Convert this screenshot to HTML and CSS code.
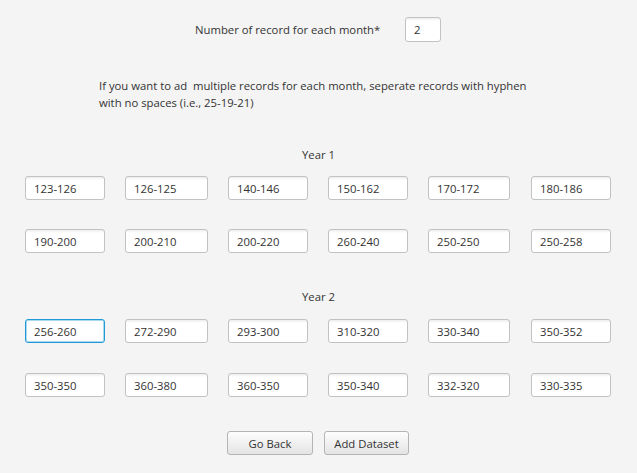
FILE: index.html
```html
<!DOCTYPE html>
<html>
<head>
<meta charset="utf-8">
<link rel="stylesheet" href="styles.css">
</head>
<body>
<div class="page">
  <div class="count-row">
    <span class="count-label">Number of record for each month*</span>
    <input class="field count-field" type="text" value="2">
  </div>
  <p class="hint">If you want to ad&nbsp; multiple records for each month, seperate records with hyphen with no spaces (i.e., 25-19-21)</p>

  <div class="year-title year-title-1">Year 1</div>
  <div class="grid-row">
    <input class="field w80" type="text" value="123-126">
    <input class="field w83" type="text" value="126-125">
    <input class="field w80" type="text" value="140-146">
    <input class="field w80" type="text" value="150-162">
    <input class="field w82" type="text" value="170-172">
    <input class="field w80 last" type="text" value="180-186">
  </div>
  <div class="grid-row row-second">
    <input class="field w80" type="text" value="190-200">
    <input class="field w83" type="text" value="200-210">
    <input class="field w80" type="text" value="200-220">
    <input class="field w80" type="text" value="260-240">
    <input class="field w82" type="text" value="250-250">
    <input class="field w80 last" type="text" value="250-258">
  </div>

  <div class="year-title year-title-2">Year 2</div>
  <div class="grid-row y2-first">
    <input class="field w80 focused" type="text" value="256-260">
    <input class="field w83" type="text" value="272-290">
    <input class="field w80" type="text" value="293-300">
    <input class="field w80" type="text" value="310-320">
    <input class="field w82" type="text" value="330-340">
    <input class="field w80 last" type="text" value="350-352">
  </div>
  <div class="grid-row y2-second">
    <input class="field w80" type="text" value="350-350">
    <input class="field w83" type="text" value="360-380">
    <input class="field w80" type="text" value="360-350">
    <input class="field w80" type="text" value="350-340">
    <input class="field w82" type="text" value="332-320">
    <input class="field w80 last" type="text" value="330-335">
  </div>

  <div class="buttons">
    <button class="btn btn-back" type="button">Go Back</button>
    <button class="btn btn-add" type="button">Add Dataset</button>
  </div>
</div>
</body>
</html>
```

FILE: styles.css
```css
html, body {
  margin: 0;
  padding: 0;
  background: #f4f4f4;
}
body {
  font-family: "Open Sans", "Noto Sans", sans-serif;
  font-size: 11.3px;
  color: #333333;
}
.page {
  width: 637px;
  height: 473px;
  display: flex;
  flex-direction: column;
  box-sizing: border-box;
  padding-top: 17px;
}
.count-row {
  display: flex;
  align-items: center;
  padding-left: 195px;
}
.count-label {
  width: 210px;
}
.field {
  box-sizing: border-box;
  height: 24px;
  margin: 0;
  border: 1px solid #c2c2c2;
  border-radius: 3px;
  background: linear-gradient(#ededed, #ffffff 3px);
  padding: 0 8px;
  font: inherit;
  color: #333333;
  outline: none;
}
.count-field {
  width: 36px;
  height: 25px;
}
.hint {
  margin: 35px 0 0 99px;
  width: 440px;
  line-height: 17px;
}
.year-title {
  text-align: center;
  width: 637px;
  line-height: 17px;
}
.year-title-1 {
  margin-top: 35px;
}
.year-title-2 {
  margin-top: 35px;
}
.grid-row {
  display: flex;
  gap: 20px;
  padding-left: 25px;
  margin-top: 13px;
}
.grid-row.row-second {
  margin-top: 29px;
}
.grid-row.y2-first {
  margin-top: 14px;
}
.grid-row.y2-second {
  margin-top: 30px;
}
.last {
  margin-left: 1px;
}
.w80 { width: 80px; }
.w82 { width: 82px; }
.w83 { width: 83px; }
.focused {
  border-color: #1f9ad6;
  box-shadow: inset 0 0 0 1px #a9d9f0;
  background: #ffffff;
}
.buttons {
  display: flex;
  gap: 11px;
  padding-left: 227px;
  margin-top: 34px;
}
.btn {
  box-sizing: border-box;
  height: 24px;
  margin: 0;
  border: 1px solid #b4b4b4;
  border-radius: 3px;
  background: linear-gradient(#fdfdfd, #e4e4e4);
  font: inherit;
  color: #333333;
  padding: 0;
}
.btn-back { width: 86px; }
.btn-add { width: 85px; }
```
